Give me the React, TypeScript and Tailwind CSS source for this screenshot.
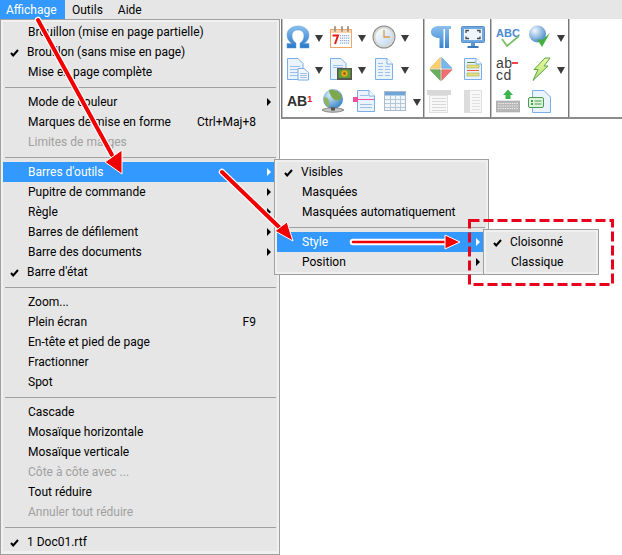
import type { ReactNode } from "react";

const FONT = "font-['Roboto','Liberation_Sans',sans-serif]";

type Item =
  | { sep: true }
  | { label: string; check?: boolean; arrow?: boolean; hint?: string; off?: boolean; on?: boolean };

const MAIN_ITEMS: Item[] = [
  { label: "Brouillon (mise en page partielle)" },
  { label: "Brouillon (sans mise en page)", check: true },
  { label: "Mise en page complète" },
  { sep: true },
  { label: "Mode de couleur", arrow: true },
  { label: "Marques de mise en forme", hint: "Ctrl+Maj+8" },
  { label: "Limites de marges", off: true },
  { sep: true },
  { label: "Barres d'outils", arrow: true, on: true },
  { label: "Pupitre de commande", arrow: true },
  { label: "Règle", arrow: true },
  { label: "Barres de défilement", arrow: true },
  { label: "Barre des documents", arrow: true },
  { label: "Barre d'état", check: true },
  { sep: true },
  { label: "Zoom..." },
  { label: "Plein écran", hint: "F9" },
  { label: "En-tête et pied de page" },
  { label: "Fractionner" },
  { label: "Spot" },
  { sep: true },
  { label: "Cascade" },
  { label: "Mosaïque horizontale" },
  { label: "Mosaïque verticale" },
  { label: "Côte à côte avec ...", off: true },
  { label: "Tout réduire" },
  { label: "Annuler tout réduire", off: true },
  { sep: true },
  { label: "1 Doc01.rtf", check: true },
];

const TOOLBAR_ITEMS: Item[] = [
  { label: "Visibles", check: true },
  { label: "Masquées" },
  { label: "Masquées automatiquement" },
  { sep: true },
  { label: "Style", arrow: true, on: true },
  { label: "Position", arrow: true },
];

const STYLE_ITEMS: Item[] = [{ label: "Cloisonné", check: true }, { label: "Classique" }];

function Check() {
  return (
    <svg width="9" height="8" viewBox="0 0 9 8" className="absolute left-[7px] top-[7px]">
      <path d="M1 4 L3.200 6.500 L8 1" fill="none" stroke="#000" strokeWidth="2" />
    </svg>
  );
}

function MenuList({ items }: { items: Item[] }) {
  return (
    <div className="flex flex-col">
      {items.map((item, i) => {
        if ("sep" in item) {
          return (
            <div key={i} className="h-[10px] flex items-center pl-[2px] pr-px">
              <div className="h-px w-full bg-[#a0a0a0]" />
            </div>
          );
        }
        const tone = item.on ? "bg-[#3399ff] text-white" : item.off ? "text-[#a0a0a0]" : "text-black";
        return (
          <div key={i} className={`relative h-5 flex items-center pl-[25px] leading-5 whitespace-nowrap ${tone}`}>
            {item.check && <Check />}
            <span className={item.check ? "-ml-px" : ""}>{item.label}</span>
            {item.hint && <span className="absolute top-0 right-[21px]">{item.hint}</span>}
            {item.arrow && (
              <span
                className={`absolute right-[6px] top-[6px] border-y-[4px] border-y-transparent border-l-[4px] ${item.on ? "border-l-white" : "border-l-black"}`}
              />
            )}
          </div>
        );
      })}
    </div>
  );
}

function Page({ children, fill = "#eaf2fb" }: { children?: ReactNode; fill?: string }) {
  return (
    <svg width="24" height="24" viewBox="0 0 24 24">
      <path d="M3.500 1.500 H15 L20.500 7 V22.500 H3.500 Z" fill={fill} stroke="#79aee6" />
      <path d="M15 1.500 V7 H20.500" fill="#fff" stroke="#79aee6" />
      {children}
    </svg>
  );
}

function Lines({ x = 6, w = 12, ys = [9, 12, 15, 18], color = "#9cc0e8" }: { x?: number; w?: number; ys?: number[]; color?: string }) {
  return (
    <>
      {ys.map((y) => (
        <rect key={y} x={x} y={y} width={w} height="1" fill={color} />
      ))}
    </>
  );
}

function Omega() {
  return (
    <svg width="24" height="24" viewBox="0 0 24 24">
      <defs>
        <linearGradient id="om" x1="0" y1="0" x2="0" y2="1">
          <stop offset="0" stopColor="#8cc0ee" />
          <stop offset="1" stopColor="#2a78c8" />
        </linearGradient>
      </defs>
      <path
        d="M1 23 V18.500 H6 C3 16.500 1 14 1 10 C1 4.500 6 1 12 1 C18 1 23 4.500 23 10 C23 14 21 16.500 18 18.500 H23 V23 H14 V18 C16.500 16.500 18 14 18 10.500 C18 7 15.500 5 12 5 C8.500 5 6 7 6 10.500 C6 14 7.500 16.500 10 18 V23 Z"
        fill="url(#om)"
        stroke="#5a9ad8"
        strokeWidth="0.500"
      />
    </svg>
  );
}

function Calendar() {
  const dots = [];
  for (let r = 0; r < 4; r++)
    for (let c = 0; c < 5; c++)
      dots.push(<rect key={`${r}${c}`} x={11 + c * 2} y={10 + r * 2.5} width="1.300" height="1.300" fill="#8fb0dc" />);
  return (
    <svg width="24" height="24" viewBox="0 0 24 24">
      <rect x="1.500" y="4.500" width="21" height="18" fill="#fff" stroke="#f0a868" />
      <rect x="2" y="5" width="20" height="3" fill="#f8d4ae" />
      {[5, 12, 18].map((x) => (
        <rect key={x} x={x} y="1" width="2" height="6" rx="1" fill="#a89a8a" />
      ))}
      <path d="M3.500 10.500 H9 L6 19" fill="none" stroke="#e02020" strokeWidth="2" />
      {dots}
    </svg>
  );
}

function Clock() {
  return (
    <svg width="24" height="24" viewBox="0 0 24 24">
      <defs>
        <linearGradient id="ck" x1="0" y1="0" x2="1" y2="1">
          <stop offset="0" stopColor="#fff" />
          <stop offset="1" stopColor="#bcd8f2" />
        </linearGradient>
      </defs>
      <circle cx="12" cy="12" r="11.500" fill="#8a8a88" />
      <circle cx="12" cy="12" r="10.500" fill="#d8d8d4" />
      <circle cx="12" cy="12" r="8.500" fill="url(#ck)" />
      <path d="M12 5 V12 H18" fill="none" stroke="#e09848" strokeWidth="1.300" />
    </svg>
  );
}

function DocCopy() {
  return (
    <svg width="24" height="24" viewBox="0 0 24 24">
      <path d="M1.500 1.500 H12 L17 6.500 V22.500 H1.500 Z" fill="#eaf2fb" stroke="#79aee6" />
      <Lines x={4} w={10} ys={[9, 12, 15, 18]} />
      <path d="M12 11.500 H18 L22.500 15.500 V23 H12 Z" fill="#f4f8fd" stroke="#79aee6" />
      <Lines x={14} w={7} ys={[16, 18, 20]} />
    </svg>
  );
}

function DocImage() {
  return (
    <svg width="24" height="24" viewBox="0 0 24 24">
      <path d="M1.500 1.500 H12 L17 6.500 V22.500 H1.500 Z" fill="#eaf2fb" stroke="#79aee6" />
      <Lines x={4} w={10} ys={[8, 10]} />
      <rect x="8" y="11" width="15" height="12" fill="#55584e" />
      <rect x="9.500" y="12.500" width="12" height="8.500" fill="#5c9c3c" />
      <circle cx="15.500" cy="16.500" r="3.200" fill="#e8a818" />
      <circle cx="15.500" cy="16.500" r="1.300" fill="#8a5a18" />
    </svg>
  );
}

function DocColumns() {
  return (
    <Page>
      <Lines x={6} w={5} ys={[6, 9, 12, 15, 18]} />
      <Lines x={13} w={5} ys={[9, 12, 15, 18]} />
    </Page>
  );
}

function Globe() {
  return (
    <svg width="24" height="24" viewBox="0 0 24 24">
      <defs>
        <radialGradient id="gl" cx="0.35" cy="0.3" r="0.8">
          <stop offset="0" stopColor="#d4ecfa" />
          <stop offset="1" stopColor="#2e7cc0" />
        </radialGradient>
      </defs>
      <circle cx="12" cy="10" r="10" fill="url(#gl)" />
      <path d="M8 1 C13 0 18 2 20.500 7 C21 11 17 12 14 11 C11 9 9 7 8 1 Z" fill="#7fa84c" />
      <path d="M3 8 C7 8 9 12 8 18 C5 17 2 13 3 8 Z" fill="#8fb45c" />
      <path d="M1 21 C5 18 19 18 23 21 C19 24 5 24 1 21 Z" fill="#c4c4c4" stroke="#707070" strokeWidth="0.800" />
      <rect x="10" y="18.500" width="4" height="3" fill="#505050" />
    </svg>
  );
}

function DocPink() {
  return (
    <svg width="24" height="24" viewBox="0 0 24 24">
      <path d="M4.500 1.500 H16 L21.500 7 V22.500 H4.500 Z" fill="#eaf2fb" stroke="#79aee6" />
      <path d="M16 1.500 V7 H21.500" fill="#fff" stroke="#79aee6" />
      <Lines x={7} w={12} ys={[15, 18]} />
      <Lines x={7} w={8} ys={[6]} />
      <rect x="3" y="10" width="18" height="1" fill="#f050a0" />
      <rect x="0" y="8" width="5" height="5" fill="#f050a0" />
    </svg>
  );
}

function TableIcon() {
  return (
    <svg width="24" height="24" viewBox="0 0 24 24">
      <rect x="1.500" y="2.500" width="21" height="19" fill="#f2f6fa" stroke="#a8bccc" />
      <rect x="2" y="3" width="20" height="3.500" fill="#6ea4d8" />
      {[7, 12, 17].map((x) => (
        <rect key={x} x={x} y="6" width="1" height="15" fill="#b4c8d8" />
      ))}
      {[10, 14, 18].map((y) => (
        <rect key={y} x="2" y={y} width="20" height="1" fill="#b4c8d8" />
      ))}
    </svg>
  );
}

function Pilcrow() {
  return (
    <svg width="24" height="24" viewBox="0 0 24 24">
      <defs>
        <linearGradient id="pc" x1="0" y1="0" x2="0" y2="1">
          <stop offset="0" stopColor="#8cc0ee" />
          <stop offset="1" stopColor="#3a84cc" />
        </linearGradient>
      </defs>
      <path d="M10 1 H22 V4 H20 V23 H16 V4 H14.500 V23 H10.500 V13 C5 13 2 10.500 2 7 C2 3.500 5 1 10 1 Z" fill="url(#pc)" />
    </svg>
  );
}

function Screen() {
  return (
    <svg width="24" height="24" viewBox="0 0 24 24">
      <rect x="0.500" y="1.500" width="23" height="16" rx="1" fill="#70a8e0" stroke="#5a90c8" />
      <rect x="3" y="4" width="18" height="11" fill="#eef6fc" />
      <path d="M5 8 V5.500 H8 M16 5.500 H19 V8 M19 11.500 V13.500 H16 M8 13.500 H5 V11.500" fill="none" stroke="#404850" strokeWidth="1.300" />
      <rect x="10" y="18" width="4" height="3" fill="#5a96d0" />
      <rect x="6.500" y="21" width="11" height="2" fill="#3a78b8" />
    </svg>
  );
}

function Diamond() {
  return (
    <svg width="24" height="24" viewBox="0 0 24 24">
      <path d="M11.300 0.500 V11.300 H1 Z" fill="#f8d070" stroke="#e8a848" strokeWidth="0.500" />
      <path d="M12.700 0.500 V11.300 H23 Z" fill="#78b8ec" stroke="#4a90d0" strokeWidth="0.500" />
      <path d="M1 12.700 H11.300 V23.500 Z" fill="#68b060" stroke="#488840" strokeWidth="0.500" />
      <path d="M23 12.700 H12.700 V23.500 Z" fill="#f07070" stroke="#d05050" strokeWidth="0.500" />
    </svg>
  );
}

function DocHighlight() {
  return (
    <Page>
      <rect x="6" y="5" width="8" height="1" fill="#5a8a4c" />
      <rect x="6" y="8" width="12" height="3" fill="#e8e080" stroke="#8aa040" strokeWidth="0.500" />
      <rect x="6" y="13" width="12" height="1" fill="#e85050" />
      <rect x="6" y="16" width="12" height="3" fill="#e8e080" stroke="#8aa040" strokeWidth="0.500" />
    </Page>
  );
}

function RulerDoc() {
  return (
    <svg width="24" height="24" viewBox="0 0 24 24">
      <rect x="2.500" y="6.500" width="18" height="17" fill="#f8f8f8" stroke="#e0e0e0" />
      <rect x="0" y="1" width="24" height="5" fill="#d8d8d8" />
      <Lines x={5} w={14} ys={[9, 12, 15, 18, 21]} color="#d8d8d8" />
    </svg>
  );
}

function RulerSide() {
  return (
    <svg width="24" height="24" viewBox="0 0 24 24">
      <rect x="3.500" y="1.500" width="17" height="22" fill="#f8f8f8" stroke="#e0e0e0" />
      <rect x="3" y="1" width="6" height="23" fill="#dcdcdc" />
      <Lines x={11} w={8} ys={[5, 8, 11, 14, 17, 20]} color="#e0e0e0" />
    </svg>
  );
}

function Abc() {
  return (
    <svg width="24" height="24" viewBox="0 0 24 24">
      <text x="0" y="12" fontFamily="Liberation Sans" fontWeight="700" fontSize="11" fill="#4a8ad0" textLength="24">
        ABC
      </text>
      <path d="M6 14 L11 21 L23 11" fill="none" stroke="#78c068" strokeWidth="1.800" />
    </svg>
  );
}

function GlobeCheck() {
  return (
    <svg width="24" height="24" viewBox="0 0 24 24">
      <defs>
        <radialGradient id="gc" cx="0.35" cy="0.3" r="0.8">
          <stop offset="0" stopColor="#f0f8fe" />
          <stop offset="1" stopColor="#3a80c4" />
        </radialGradient>
      </defs>
      <circle cx="9.500" cy="9" r="8.500" fill="url(#gc)" />
      <path d="M9 14 L14 22 L22 8 L14 15 Z" fill="#44b040" />
    </svg>
  );
}

function AbCd() {
  return (
    <div className="relative w-[24px] h-[24px] font-['Liberation_Sans'] text-[14px] leading-[12px] text-[#404040] tracking-[0.5px]">
      ab
      <br />
      cd
      <span className="absolute left-[16px] top-[5px] h-[2px] w-[6px] bg-[#f04848]" />
    </div>
  );
}

function Bolt() {
  return (
    <svg width="24" height="24" viewBox="0 0 24 24">
      <defs>
        <linearGradient id="bt" x1="0" y1="0" x2="0" y2="1">
          <stop offset="0" stopColor="#f0f8a0" />
          <stop offset="1" stopColor="#a8e070" />
        </linearGradient>
      </defs>
      <path d="M17 1 H22 L16 9 H20 L5 23.500 L10 12.500 H6 Z" fill="url(#bt)" stroke="#58a848" />
    </svg>
  );
}

function KeyboardUp() {
  return (
    <svg width="24" height="24" viewBox="0 0 24 24">
      <path d="M12 0.500 L17 6 H14.500 V10 H9.500 V6 H7 Z" fill="#3cb44c" />
      <rect x="0" y="12" width="24" height="11" fill="#b8b8b8" stroke="#a0a0a0" strokeWidth="0.500" />
      {[14, 16.5, 19].map((y) => (
        <path key={y} d={`M2 ${y + 0.5} H22`} stroke="#f0f0f0" strokeDasharray="1.300 1" />
      ))}
    </svg>
  );
}

function DocCard() {
  return (
    <svg width="24" height="24" viewBox="0 0 24 24">
      <path d="M4.500 1.500 H16 L22.500 8 V23.500 H4.500 Z" fill="#eaf2fb" stroke="#79aee6" />
      <rect x="0.500" y="8.500" width="15" height="10" rx="1.500" fill="#e0f4dc" stroke="#4a9c54" />
      <rect x="3" y="11" width="2" height="2" fill="#4a9c54" />
      <rect x="3" y="14" width="2" height="2" fill="#4a9c54" />
      <rect x="6.500" y="11.500" width="7" height="1" fill="#4a9c54" />
      <rect x="6.500" y="14.500" width="7" height="1" fill="#4a9c54" />
    </svg>
  );
}

function Tri() {
  return <span className="block mt-[2px] border-x-[4px] border-x-transparent border-t-[7px] border-t-[#3c3c3c]" />;
}

function Row({ children, className }: { children: ReactNode; className: string }) {
  return <div className={`h-[32px] flex items-center ${className}`}>{children}</div>;
}

const DIVIDER = "shadow-[inset_1px_0_0_#787878,inset_2px_0_0_#c0c0c0]";

export default function App() {
  return (
    <div className={`relative w-[622px] h-[555px] overflow-hidden bg-white text-[12px] ${FONT}`}>
      {/* menu bar */}
      <div className="h-[19px] flex items-center bg-[#e6e6e6] text-black">
        <div className="h-full w-[65px] bg-[#3399ff] text-white flex items-center pl-[6px]">Affichage</div>
        <span className="ml-[7px]">Outils</span>
        <span className="ml-[15px]">Aide</span>
      </div>

      <div className="flex items-start">
        <div className="w-[280px] h-[536px] shrink-0 border border-[#a0a0a0] bg-[#f0f0f0] p-[2px] pb-[3px]">
          <div className="bg-[#e6e6e6] h-full">
            <MenuList items={MAIN_ITEMS} />
          </div>
        </div>

        {/* toolbar */}
        <div className="flex h-[100px] flex-1 ml-px border-b-2 border-[#8c8c8c] bg-white">
          <div className={`w-[142px] ${DIVIDER} pt-[2px] pl-[1px]`}>
            <Row className="pl-[4px]">
              <Omega />
              <span className="ml-[5px]"><Tri /></span>
              <span className="ml-[6px]"><Calendar /></span>
              <span className="ml-[5px]"><Tri /></span>
              <span className="ml-[6px]"><Clock /></span>
              <span className="ml-[5px]"><Tri /></span>
            </Row>
            <Row className="pl-[4px]">
              <DocCopy />
              <span className="ml-[5px]"><Tri /></span>
              <span className="ml-[6px]"><DocImage /></span>
              <span className="ml-[5px]"><Tri /></span>
              <span className="ml-[6px]"><DocColumns /></span>
              <span className="ml-[5px]"><Tri /></span>
            </Row>
            <Row className="pl-[5px]">
              <span className="w-[23px] font-['Liberation_Sans'] font-bold text-[14px] text-[#303030] whitespace-nowrap leading-none">
                AB<sup className="text-[9px] text-[#e02020]">1</sup>
              </span>
              <span className="ml-[11px]"><Globe /></span>
              <span className="ml-[8px]"><DocPink /></span>
              <span className="ml-[6px]"><TableIcon /></span>
              <span className="ml-[6px]"><Tri /></span>
            </Row>
          </div>
          <div className={`w-[67px] ${DIVIDER} pt-[2px]`}>
            <Row className="pl-[6px] gap-[8px]"><Pilcrow /><Screen /></Row>
            <Row className="pl-[6px] gap-[8px]"><Diamond /><DocHighlight /></Row>
            <Row className="pl-[4px] gap-[10px]"><RulerDoc /><RulerSide /></Row>
          </div>
          <div className={`w-[78px] ${DIVIDER} pt-[2px]`}>
            <Row className="pl-[6px] gap-[8px]"><Abc /><GlobeCheck /><span className="-ml-[3px]"><Tri /></span></Row>
            <Row className="pl-[6px] gap-[8px]"><AbCd /><Bolt /><span className="-ml-[3px]"><Tri /></span></Row>
            <Row className="pl-[6px] gap-[8px]"><KeyboardUp /><DocCard /></Row>
          </div>
          <div className={`w-[2px] ${DIVIDER}`} />
        </div>
      </div>

      {/* open submenus */}
      <div className="absolute left-[274px] top-[159px] w-[215px] border border-[#a0a0a0] bg-[#f0f0f0] p-[2px]">
        <div className="bg-[#e6e6e6]">
          <MenuList items={TOOLBAR_ITEMS} />
        </div>
      </div>
      <div className="absolute left-[483px] top-[229px] w-[116px] border border-[#a0a0a0] bg-[#f0f0f0] p-[2px]">
        <div className="bg-[#e6e6e6]">
          <MenuList items={STYLE_ITEMS} />
        </div>
      </div>

      {/* annotations */}
      <svg className="absolute left-0 top-0" width="622" height="555" viewBox="0 0 622 555">
        <rect x="469.500" y="220.500" width="143" height="64" fill="none" stroke="#e8001c" strokeWidth="3" strokeDasharray="10 4" />
        <g fill="none" strokeLinecap="round" stroke="#ffffff" strokeWidth="6.500">
          <path d="M38 20 L112 155" />
          <path d="M222 172 L280 228" />
          <path d="M353 242 L445 242" />
        </g>
        <g fill="none" strokeLinecap="round" stroke="#f00000" strokeWidth="4">
          <path d="M38 20 L112 155" />
          <path d="M222 172 L280 228" />
        </g>
        <path d="M353 242 L445 242" stroke="#f00000" strokeWidth="2.500" strokeLinecap="round" />
        <g fill="#f00000" stroke="#fff" strokeWidth="1" strokeLinejoin="round">
          <path d="M122 174 L105 162 L122 150 Z" />
          <path d="M293 241 L275 231 L287 222 Z" />
          <path d="M460 242 L445 235 L445 249 Z" />
        </g>
      </svg>
    </div>
  );
}
